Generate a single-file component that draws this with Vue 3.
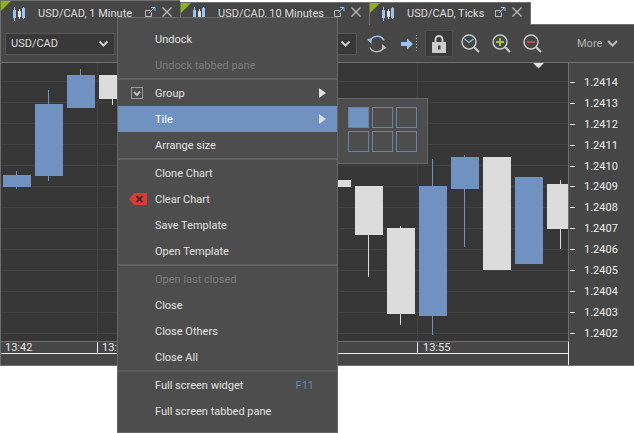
<template>
  <div class="page">
    <div class="tabs">
      <div v-for="tab in tabs" :key="tab.title" class="tab" :style="{ width: tab.width + 'px' }">
        <svg class="tab-icon" width="14" height="14" viewBox="0 0 14 14">
          <path d="M2.5 0v14" stroke="#9cc4ee" />
          <rect x="1" y="3" width="3" height="8" fill="#9cc4ee" />
          <path d="M7.5 2v10" stroke="#ddd" />
          <rect x="6" y="4" width="3" height="6" fill="#ddd" />
          <path d="M11.5 0v12" stroke="#9cc4ee" />
          <rect x="10" y="1" width="3" height="10" fill="#9cc4ee" />
        </svg>
        <span class="tab-title">{{ tab.title }}</span>
        <svg class="tab-action" width="11" height="10" viewBox="0 0 11 10" fill="none">
          <path d="M5.500 3.500h-5v6h6v-4" stroke="#bbb" />
          <path d="M4 6l5.500-5.500M6 .5h4V4" stroke="#9cc4ee" />
        </svg>
        <svg class="tab-action close" width="10" height="10" viewBox="0 0 10 10" fill="none">
          <path d="M.5.5l9 9M9.500.5l-9 9" stroke="#bbb" stroke-width="1.200" />
        </svg>
      </div>
      <div class="tabs-rest"></div>
    </div>

    <div class="window">
      <div class="toolbar">
        <div class="select first">
          <span>USD/CAD</span>
          <svg width="11" height="7" viewBox="0 0 11 7" fill="none"><path d="M1.500 1.500l4 4 4-4" stroke="#ccc" stroke-width="2" /></svg>
        </div>
        <div class="select second">
          <svg width="11" height="7" viewBox="0 0 11 7" fill="none"><path d="M1.500 1.500l4 4 4-4" stroke="#ccc" stroke-width="2" /></svg>
        </div>
        <svg class="tool refresh" width="20" height="20" viewBox="0 0 20 20" fill="none">
          <path d="M3 8a7.500 7.500 0 0 1 14-1.500" stroke="#9cc4ee" stroke-width="1.400" />
          <path d="M0 5.500l4.500-1.500v6z" fill="#9cc4ee" />
          <path d="M17 12a7.500 7.500 0 0 1-14 1.500" stroke="#bbb" stroke-width="1.400" />
          <path d="M19.500 14l-4.500 2v-6z" fill="#bbb" />
        </svg>
        <svg class="tool arrow" width="18" height="18" viewBox="0 0 18 18" fill="none">
          <path d="M0 7h6V3.500l6 5.500-6 5.500V11H0z" fill="#9cc4ee" />
          <path d="M15.500 0v18" stroke="#bbb" stroke-dasharray="1 2" />
        </svg>
        <div class="lock-btn">
          <svg width="14" height="18" viewBox="0 0 14 18" fill="none">
            <path d="M3.500 8V4.500a3.500 3.500 0 0 1 7 0V8" stroke="#ccc" stroke-width="2" />
            <rect y="7" width="14" height="11" fill="#ccc" />
            <rect x="6" y="10.500" width="2.500" height="4" fill="#444" />
          </svg>
        </div>
        <svg class="tool lens first-lens" width="20" height="20" viewBox="0 0 20 20" fill="none">
          <circle cx="8" cy="8" r="7" stroke="#c8c8c8" stroke-width="1.500" />
          <path d="M13 13l5 5" stroke="#c8c8c8" stroke-width="2.200" />
          <path d="M3.500 5l4.500 3.500L12.500 5" stroke="#9cc4ee" stroke-width="1.200" />
        </svg>
        <svg class="tool lens" width="20" height="20" viewBox="0 0 20 20" fill="none">
          <circle cx="8" cy="8" r="7" stroke="#c8c8c8" stroke-width="1.500" />
          <path d="M13 13l5 5" stroke="#c8c8c8" stroke-width="2.200" />
          <path d="M4 8h8M8 4v8" stroke="#a4c639" stroke-width="2" />
        </svg>
        <svg class="tool lens" width="20" height="20" viewBox="0 0 20 20" fill="none">
          <circle cx="8" cy="8" r="7" stroke="#c8c8c8" stroke-width="1.500" />
          <path d="M13 13l5 5" stroke="#c8c8c8" stroke-width="2.200" />
          <path d="M4 8h8" stroke="#c4444f" stroke-width="2" />
        </svg>
        <div class="more">
          <span>More</span>
          <svg width="11" height="7" viewBox="0 0 11 7" fill="none"><path d="M1 1l4.500 4.500L10 1" stroke="#bbb" stroke-width="2" /></svg>
        </div>
      </div>

      <div class="chart-row">
        <div class="chart-col">
          <svg class="chart" width="567" height="278" viewBox="0 63 567 278">
            <rect x="0" y="63" width="567" height="278" fill="#363636" />
            <rect v-for="y in gridY" :key="y" x="0" :y="y" width="567" height="1" fill="#414141" />
            <rect x="96" y="63" width="1" height="278" fill="#414141" />
            <rect x="416" y="63" width="1" height="278" fill="#414141" />
            <g v-for="c in candles" :key="c.x">
              <rect :x="c.x + 13" :y="c.wickTop" width="1" :height="c.wickBottom - c.wickTop" :fill="c.color" />
              <rect :x="c.x" :y="c.top" :width="c.w || 28" :height="c.bottom - c.top" :fill="c.color" />
            </g>
            <path d="M532 63h11l-5.500 5.500z" fill="#e0e0e0" />
          </svg>
          <div class="time-axis">
            <span class="time-label t1">13:42</span>
            <span class="time-label t3">13:45</span>
            <span class="time-label t2">13:55</span>
          </div>
          <div class="time-pad"></div>
        </div>
        <div class="price-axis">
          <div v-for="p in prices" :key="p" class="price">
            <i class="tick"></i>
            <span>{{ p }}</span>
          </div>
        </div>
      </div>
    </div>

    <div class="menu">
      <template v-for="(item, i) in menu" :key="i">
        <div v-if="item.sep" class="sep"></div>
        <div v-else class="item" :class="{ off: item.off, active: item.active }">
          <svg v-if="item.check" class="lead" width="12" height="12" viewBox="0 0 12 12" fill="none">
            <rect x=".5" y=".5" width="11" height="11" stroke="#999" />
            <path d="M3 5l3 3 3-3.500" stroke="#bbb" stroke-width="2" />
          </svg>
          <svg v-if="item.clear" class="lead wide" width="18" height="12" viewBox="0 0 18 12">
            <path d="M0 6l5-6h13v12H5z" fill="#d93a3a" />
            <path d="M7.500 3l6 6M13.500 3l-6 6" stroke="#4d2a2a" stroke-width="2" />
          </svg>
          <span class="label">{{ item.label }}</span>
          <span v-if="item.key" class="key">{{ item.key }}</span>
          <svg v-if="item.sub" class="caret" width="7" height="10" viewBox="0 0 7 10"><path d="M0 0l7 5-7 5z" fill="#ddd" /></svg>
        </div>
      </template>
    </div>

    <div class="submenu">
      <i v-for="n in 6" :key="n" class="cell" :class="{ on: n === 1 }"></i>
    </div>
  </div>
</template>

<script setup>
const tabs = [
  { title: 'USD/CAD, 1 Minute', width: 180 },
  { title: 'USD/CAD, 10 Minutes', width: 189 },
  { title: 'USD/CAD, Ticks', width: 162 },
]

const blue = '#6f92c0'
const white = '#dcdcdc'
const candles = [
  { x: 2, top: 175, bottom: 187, wickTop: 171, wickBottom: 189, color: blue },
  { x: 34, top: 104, bottom: 176, wickTop: 90, wickBottom: 181, color: blue },
  { x: 66, top: 75, bottom: 108, wickTop: 69, wickBottom: 108, color: blue },
  { x: 98, top: 75, bottom: 99, wickTop: 75, wickBottom: 105, color: white },
  { x: 322, top: 180, bottom: 187, wickTop: 180, wickBottom: 187, color: white },
  { x: 354, top: 186, bottom: 235, wickTop: 186, wickBottom: 277, color: white },
  { x: 386, top: 228, bottom: 314, wickTop: 226, wickBottom: 325, color: white },
  { x: 418, top: 186, bottom: 316, wickTop: 159, wickBottom: 335, color: blue },
  { x: 450, top: 157, bottom: 189, wickTop: 155, wickBottom: 247, color: blue },
  { x: 482, top: 157, bottom: 270, wickTop: 157, wickBottom: 270, color: white },
  { x: 514, top: 177, bottom: 264, wickTop: 177, wickBottom: 264, color: blue },
  { x: 546, top: 184, bottom: 229, wickTop: 180, wickBottom: 249, color: white, w: 21 },
]

const gridY = [81, 102, 123, 144, 165, 186, 207, 228, 249, 270, 291, 312, 333]

const prices = ['1.2414', '1.2413', '1.2412', '1.2411', '1.2410', '1.2409', '1.2408', '1.2407', '1.2406', '1.2405', '1.2404', '1.2403', '1.2402']

const menu = [
  { label: 'Undock' },
  { label: 'Undock tabbed pane', off: true },
  { sep: true },
  { label: 'Group', check: true, sub: true },
  { label: 'Tile', sub: true, active: true },
  { label: 'Arrange size' },
  { sep: true },
  { label: 'Clone Chart' },
  { label: 'Clear Chart', clear: true },
  { label: 'Save Template' },
  { label: 'Open Template' },
  { sep: true },
  { label: 'Open last closed', off: true },
  { label: 'Close' },
  { label: 'Close Others' },
  { label: 'Close All' },
  { sep: true },
  { label: 'Full screen widget', key: 'F11' },
  { label: 'Full screen tabbed pane' },
]
</script>

<style>
html, body {
  margin: 0;
  background: #fff;
}
</style>

<style scoped>
.page {
  position: relative;
  width: 634px;
  height: 433px;
  overflow: hidden;
  background: #fff;
  font: 11px Roboto, sans-serif;
  color: #ddd;
}

.tabs {
  display: flex;
  align-items: flex-end;
  height: 25px;
}

.tab {
  position: relative;
  display: flex;
  align-items: center;
  flex: none;
  box-sizing: border-box;
  height: 23px;
  padding-left: 11px;
  padding-right: 8px;
  background: #464646;
  border-top: 1px solid #6f6f6f;
  border-left: 1px solid #6f6f6f;
}

.tab:first-child {
  height: 25px;
  padding-top: 2px;
}

.tab:nth-child(3) {
  border-right: 1px solid #6f6f6f;
}

.tab::before {
  content: "";
  position: absolute;
  left: 0;
  top: 0;
  border-top: 10px solid #8fb021;
  border-right: 10px solid transparent;
}

.tabs-rest {
  flex: 1;
  border-bottom: 1px solid #6f6f6f;
}

.tab-icon {
  margin-right: 12px;
  flex: none;
}

.tab-title {
  flex: 1;
  white-space: nowrap;
  overflow: hidden;
  position: relative;
  top: -1px;
}

.tab-action {
  flex: none;
  margin-top: -5px;
}

.tab-action.close {
  margin-left: 6px;
}

.window {
  display: flex;
  flex-direction: column;
  box-sizing: border-box;
  height: 341px;
  background: #464646;
  border-left: 1px solid #6f6f6f;
  border-bottom: 1px solid #6f6f6f;
}

.toolbar {
  display: flex;
  align-items: center;
  box-sizing: border-box;
  height: 38px;
  padding-left: 4px;
  flex: none;
  border-bottom: 1px solid #6f6f6f;
}

.select {
  display: flex;
  align-items: center;
  justify-content: space-between;
  box-sizing: border-box;
  height: 22px;
  padding: 0 5px;
  background: #383838;
  border: 1px solid #555;
}

.select.first {
  width: 110px;
}

.select.second {
  justify-content: flex-end;
  width: 110px;
  margin-left: 132px;
}

.tool {
  flex: none;
}

.refresh {
  margin-left: 10px;
}

.arrow {
  margin-left: 14px;
}

.lock-btn {
  display: flex;
  align-items: center;
  justify-content: center;
  box-sizing: border-box;
  width: 28px;
  height: 27px;
  margin-left: 6px;
  background: #3a3a3a;
  border: 1px solid #505050;
}

.lens {
  margin-left: 11px;
}

.lens.first-lens {
  margin-left: 8px;
}

.more {
  display: flex;
  align-items: center;
  gap: 5px;
  margin-left: 34px;
  color: #b5b5b5;
}

.chart-row {
  display: flex;
  flex: 1;
  min-height: 0;
}

.chart-col {
  display: flex;
  flex-direction: column;
  flex: none;
  width: 568px;
  box-sizing: border-box;
  border-right: 1px solid #6f6f6f;
}

.chart {
  display: block;
  flex: none;
}

.time-axis {
  position: relative;
  flex: none;
  box-sizing: border-box;
  height: 13px;
  margin-right: -1px;
  border-top: 1px solid #6f6f6f;
  border-bottom: 1px solid #eee;
  border-right: 1px solid #eee;
}

.time-label {
  position: absolute;
  top: 0;
  height: 11px;
  padding-left: 5px;
  border-left: 1px solid #eee;
  line-height: 11px;
  color: #e6e6e6;
}

.t1 {
  left: -1px;
  border-left: 0;
}

.t2 {
  left: 416px;
}

.t3 {
  left: 96px;
  padding-left: 4px;
}

.time-pad {
  flex: 1;
  border-right: 1px solid #eee;
  margin-right: -1px;
}

.price-axis {
  flex: 1;
  padding-top: 9px;
}

.price {
  display: flex;
  align-items: center;
  height: 20.9px;
  color: #eee;
}

.tick {
  width: 5px;
  height: 1px;
  margin: 0 9px 0 1px;
  background: #eee;
}

.menu {
  position: absolute;
  left: 117px;
  top: 17px;
  box-sizing: border-box;
  width: 221px;
  height: 416px;
  padding: 8px 0;
  background: #4d4d4d;
  border: 1px solid #666;
}

.item {
  position: relative;
  display: flex;
  align-items: center;
  height: 26px;
  padding: 0 11px 0 37px;
  color: #e2e2e2;
}

.item.off {
  color: #7c7c7c;
}

.item.active {
  background: #6f92c0;
  color: #fff;
}

.label {
  flex: 1;
}

.key {
  color: #6283b5;
  margin-right: 12px;
}

.caret {
  flex: none;
}

.lead {
  position: absolute;
  left: 13px;
  top: 7px;
}

.lead.wide {
  left: 11px;
}

.sep {
  height: 2px;
  background: #5e5e5e;
}

.submenu {
  position: absolute;
  left: 338px;
  top: 98px;
  display: grid;
  grid-template-columns: repeat(3, 21px);
  grid-auto-rows: 21px;
  gap: 3px;
  box-sizing: border-box;
  width: 90px;
  height: 66px;
  padding: 8px 10px;
  background: #4d4d4d;
  border: 1px solid #666;
  border-left: 0;
}

.cell {
  box-sizing: border-box;
  border: 1px solid #6a82a6;
}

.cell.on {
  background: #6f92c0;
}
</style>
